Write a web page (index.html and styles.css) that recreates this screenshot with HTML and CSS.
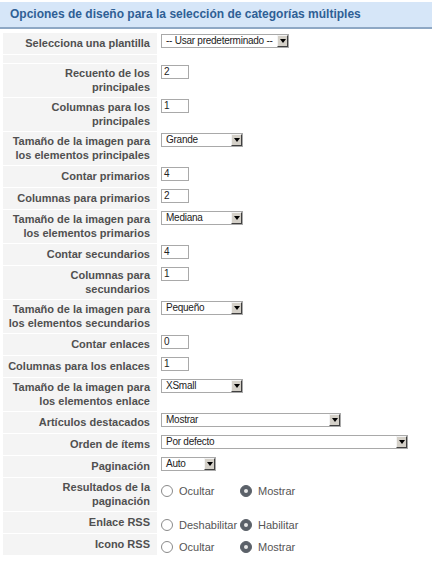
FILE: index.html
```html
<!DOCTYPE html>
<html lang="es">
<head>
<meta charset="utf-8">
<link rel="stylesheet" href="styles.css">
</head>
<body>
<div class="panel">
  <h3 class="panel-title">Opciones de diseño para la selección de categorías múltiples</h3>
  <table class="params">
    <tr>
      <td class="key">Selecciona una plantilla</td>
      <td class="val"><span class="sel w128"><span class="sel-text">-- Usar predeterminado --</span><span class="sel-btn"></span></span></td>
    </tr>
    <tr class="spacer"><td class="key"></td><td class="val"></td></tr>
    <tr>
      <td class="key">Recuento de los<br>principales</td>
      <td class="val"><span class="inp">2</span></td>
    </tr>
    <tr>
      <td class="key">Columnas para los<br>principales</td>
      <td class="val"><span class="inp">1</span></td>
    </tr>
    <tr>
      <td class="key">Tamaño de la imagen para<br>los elementos principales</td>
      <td class="val"><span class="sel w82"><span class="sel-text">Grande</span><span class="sel-btn"></span></span></td>
    </tr>
    <tr>
      <td class="key">Contar primarios</td>
      <td class="val"><span class="inp">4</span></td>
    </tr>
    <tr>
      <td class="key">Columnas para primarios</td>
      <td class="val"><span class="inp">2</span></td>
    </tr>
    <tr>
      <td class="key">Tamaño de la imagen para<br>los elementos primarios</td>
      <td class="val"><span class="sel w82"><span class="sel-text">Mediana</span><span class="sel-btn"></span></span></td>
    </tr>
    <tr>
      <td class="key">Contar secundarios</td>
      <td class="val"><span class="inp">4</span></td>
    </tr>
    <tr>
      <td class="key">Columnas para<br>secundarios</td>
      <td class="val"><span class="inp">1</span></td>
    </tr>
    <tr>
      <td class="key">Tamaño de la imagen para<br>los elementos secundarios</td>
      <td class="val"><span class="sel w82"><span class="sel-text">Pequeño</span><span class="sel-btn"></span></span></td>
    </tr>
    <tr>
      <td class="key">Contar enlaces</td>
      <td class="val"><span class="inp">0</span></td>
    </tr>
    <tr>
      <td class="key">Columnas para los enlaces</td>
      <td class="val"><span class="inp">1</span></td>
    </tr>
    <tr>
      <td class="key">Tamaño de la imagen para<br>los elementos enlace</td>
      <td class="val"><span class="sel w82"><span class="sel-text">XSmall</span><span class="sel-btn"></span></span></td>
    </tr>
    <tr>
      <td class="key">Artículos destacados</td>
      <td class="val"><span class="sel w180"><span class="sel-text">Mostrar</span><span class="sel-btn"></span></span></td>
    </tr>
    <tr>
      <td class="key">Orden de ítems</td>
      <td class="val"><span class="sel w247"><span class="sel-text">Por defecto</span><span class="sel-btn"></span></span></td>
    </tr>
    <tr>
      <td class="key">Paginación</td>
      <td class="val"><span class="sel w55"><span class="sel-text">Auto</span><span class="sel-btn"></span></span></td>
    </tr>
    <tr>
      <td class="key">Resultados de la<br>paginación</td>
      <td class="val"><span class="radios"><span class="opt"><span class="radio"></span><span class="rlabel">Ocultar</span></span><span class="opt"><span class="radio on"></span><span class="rlabel">Mostrar</span></span></span></td>
    </tr>
    <tr>
      <td class="key">Enlace RSS</td>
      <td class="val"><span class="radios"><span class="opt"><span class="radio"></span><span class="rlabel">Deshabilitar</span></span><span class="opt"><span class="radio on"></span><span class="rlabel">Habilitar</span></span></span></td>
    </tr>
    <tr>
      <td class="key">Icono RSS</td>
      <td class="val"><span class="radios"><span class="opt"><span class="radio"></span><span class="rlabel">Ocultar</span></span><span class="opt"><span class="radio on"></span><span class="rlabel">Mostrar</span></span></span></td>
    </tr>
  </table>
</div>
</body>
</html>
```

FILE: styles.css
```css
html, body {
  margin: 0;
  padding: 0;
  background: #ffffff;
}
body {
  font-family: "Liberation Sans", Arial, sans-serif;
  font-size: 11px;
  color: #555;
}
.panel {
  width: 432px;
}
.panel-title {
  margin: 2px 0 0 0;
  height: 25px;
  line-height: 25px;
  padding: 0 0 0 10px;
  background: #d6e6f8;
  border-bottom: 2px solid #8ea8c5;
  color: #2f5f95;
  font-size: 12px;
  font-weight: bold;
}
.params {
  border-collapse: separate;
  border-spacing: 1px;
  margin: 3px 0 0 2px;
}
.key {
  width: 142px;
  padding: 2px 7px 3px 5px;
  background: #f4f4f4;
  text-align: right;
  vertical-align: middle;
  font-weight: bold;
  color: #505050;
  line-height: 14px;
  white-space: nowrap;
}
.val {
  padding: 1px 0 0 3px;
  vertical-align: top;
  height: 21px;
  box-sizing: border-box;
}
.spacer .key, .spacer .val {
  height: 8px;
  padding: 0;
}
.spacer .val { background: #fff; }
.inp {
  display: block;
  width: 28px;
  height: 14px;
  box-sizing: border-box;
  border: 1px solid #a9a9a9;
  font-size: 10px;
  line-height: 12px;
  padding-left: 2px;
  color: #222;
}
.sel {
  display: flex;
  align-items: center;
  height: 14px;
  box-sizing: border-box;
  border: 1px solid #a9a9a9;
  font-size: 10px;
  color: #222;
  background: #fff;
}
.w128 { width: 128px; }
.w82 { width: 82px; }
.w180 { width: 180px; }
.w247 { width: 247px; }
.w55 { width: 55px; }
.sel-text {
  flex: 1;
  padding-left: 4px;
  line-height: 12px;
  overflow: hidden;
  white-space: nowrap;
  letter-spacing: -0.25px;
}
.sel-btn {
  position: relative;
  flex: none;
  width: 11px;
  height: 12px;
  box-sizing: border-box;
  background: #d4d0c8;
  border-top: 1px solid #f4f4f4;
  border-left: 1px solid #f4f4f4;
  border-right: 1px solid #404040;
  border-bottom: 1px solid #404040;
}
.sel-btn::after {
  content: "";
  position: absolute;
  left: 2px;
  top: 3px;
  border-left: 3px solid transparent;
  border-right: 3px solid transparent;
  border-top: 4px solid #000;
}
.radios {
  display: flex;
  align-items: center;
  padding-top: 5px;
  font-size: 11px;
  color: #555;
}
.opt {
  display: flex;
  align-items: center;
}
.opt:first-child {
  width: 79px;
}
.radio {
  width: 12px;
  height: 12px;
  box-sizing: border-box;
  border: 1px solid #8a8a8a;
  border-radius: 50%;
  background: #fff;
  margin-right: 6px;
  position: relative;
}
.radio.on {
  background: #5b6169;
  border-color: #5b6169;
}
.radio.on::after {
  content: "";
  position: absolute;
  left: 3px;
  top: 3px;
  width: 4px;
  height: 4px;
  border-radius: 50%;
  background: #e8e8e8;
}
.rlabel {
  line-height: 14px;
}
```
